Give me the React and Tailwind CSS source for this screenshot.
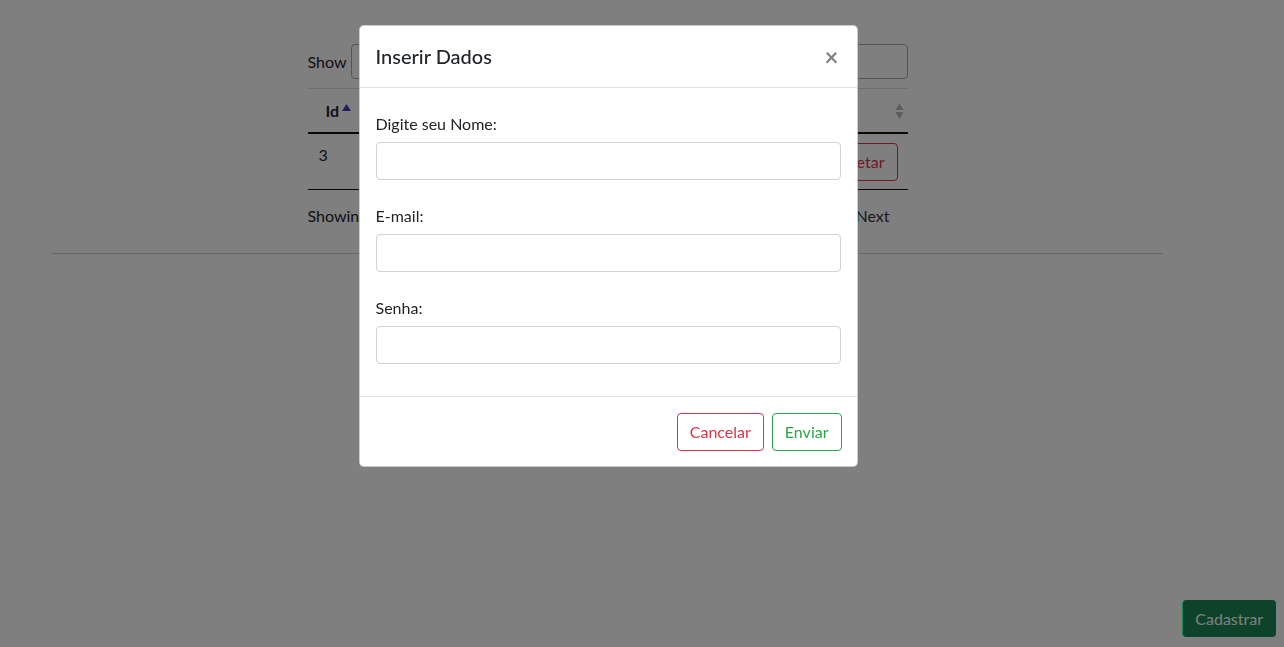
export default function App() {
  const font = { fontFamily: '"Segoe UI", Lato, "Open Sans", sans-serif' };
  return (
    <div className="relative min-h-screen w-full bg-white text-[16px] text-[#212529]" style={font}>
      {/* page behind the modal */}
      <div className="w-[1216px]">
        <div className="ml-[52px] w-[1111px] pt-[44px]">
          <div className="mx-auto w-[600px]">
            <div className="flex h-[35px] items-center justify-between">
              <div className="flex items-center gap-[4px]">
                <span>Show</span>
                <div className="h-[35px] w-[60px] rounded border border-[#aaa]" />
              </div>
              <div className="h-[35px] w-[200px] rounded border border-[#aaa]" />
            </div>
            <div className="mt-[9px] border-t border-[#ddd]">
              <div className="flex h-[45px] items-center justify-between border-b-2 border-[#111] pl-[18px] pr-[4px]">
                <span className="flex items-center gap-[3px] font-bold">
                  Id
                  <svg width="9" height="8" viewBox="0 0 9 8" className="mb-[6px]">
                    <path d="M4.5 0 L9 7 L0 7 Z" fill="#3c3cbe" />
                  </svg>
                </span>
                <svg width="9" height="18" viewBox="0 0 9 18">
                  <path d="M4.5 1 L8.5 8 L0.5 8 Z" fill="#bbb" />
                  <path d="M4.5 17 L8.5 10 L0.5 10 Z" fill="#bbb" />
                </svg>
              </div>
              <div className="flex h-[56px] items-start justify-between border-b border-[#111] pl-[11px] pr-[10px] pt-[9px]">
                <span className="leading-[24px]">3</span>
                <button className="h-[38px] rounded border border-[#dc3545] px-[12px] text-[#dc3545]">Deletar</button>
              </div>
            </div>
            <div className="mt-[14px] flex items-center justify-between pr-[18px]">
              <span>Showing</span>
              <span className="text-[#333]">Next</span>
            </div>
          </div>
          <hr className="mt-[25px] border-t border-[#ccc]" />
        </div>
      </div>

      {/* backdrop */}
      <div className="fixed inset-0 bg-black/50" />

      <button className="fixed bottom-[10px] right-[8px] h-[37px] rounded bg-[#198754] px-[13px] text-white">
        <span className="relative">Cadastrar</span>
      </button>
      <div className="fixed bottom-[10px] right-[8px] h-[37px] w-[93px] rounded bg-black/50" />

      {/* modal */}
      <div className="fixed inset-0">
        <div className="w-[1216px]">
          <div className="mx-auto mt-[25px] w-[499px] rounded-[5px] border border-black/20 bg-white">
            <div className="flex h-[62px] items-center justify-between border-b border-[#dee2e6] px-[16px]">
              <h5 className="mb-[2px] text-[20px] font-medium">Inserir Dados</h5>
              <span className="mr-[2px] text-[24px] font-bold leading-none text-black/50">×</span>
            </div>
            <div className="px-[16px] pt-[24px] pb-[32px]">
              <div>
                <label className="block leading-[24px]">Digite seu Nome:</label>
                <div className="mt-[6px] h-[38px] rounded border border-[#ced4da]" />
              </div>
              <div className="mt-[24px]">
                <label className="block leading-[24px]">E-mail:</label>
                <div className="mt-[6px] h-[38px] rounded border border-[#ced4da]" />
              </div>
              <div className="mt-[24px]">
                <label className="block leading-[24px]">Senha:</label>
                <div className="mt-[6px] h-[38px] rounded border border-[#ced4da]" />
              </div>
            </div>
            <div className="flex h-[70px] items-center justify-end gap-[8px] border-t border-[#dee2e6] px-[15px]">
              <button className="h-[38px] rounded border border-[#dc3545] px-[12px] text-[#dc3545]">Cancelar</button>
              <button className="h-[38px] rounded border border-[#28a745] px-[12px] text-[#28a745]">Enviar</button>
            </div>
          </div>
        </div>
      </div>
    </div>
  );
}
